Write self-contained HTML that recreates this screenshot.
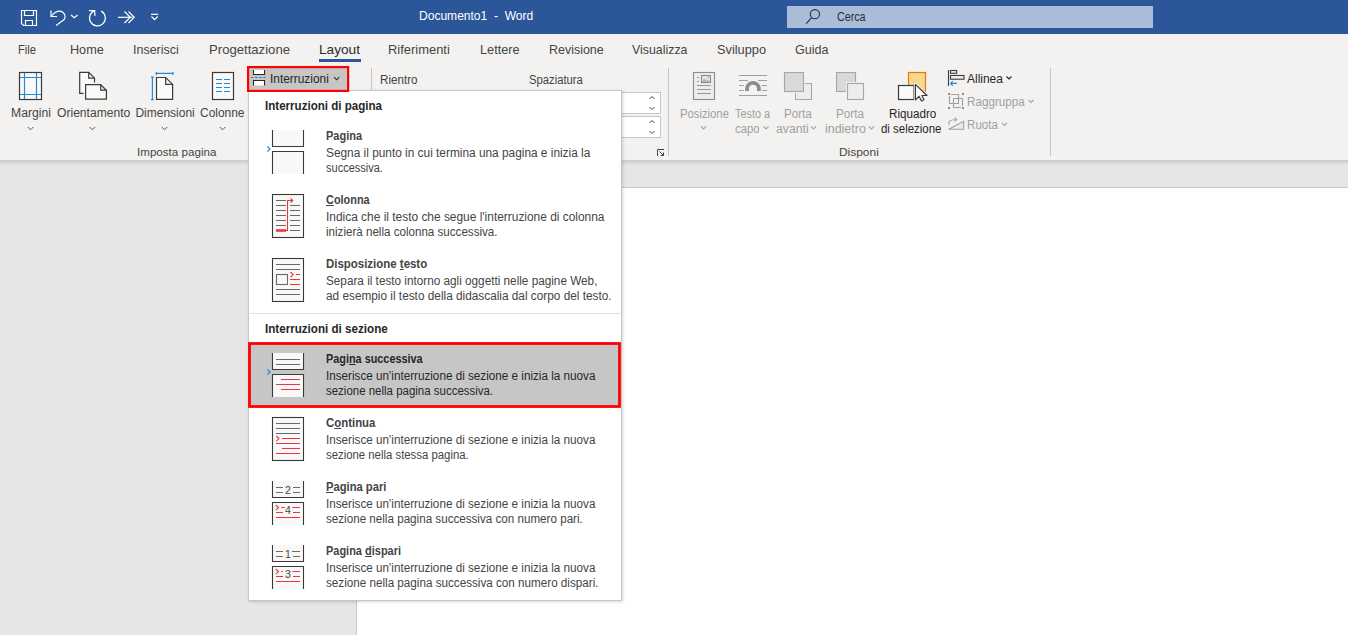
<!DOCTYPE html>
<html><head><meta charset="utf-8">
<style>
*{margin:0;padding:0;box-sizing:border-box}
html,body{width:1348px;height:635px;overflow:hidden;background:#e6e6e6;font-family:"Liberation Sans", sans-serif}
.a{position:absolute}
.t{position:absolute;white-space:pre;line-height:1;transform-origin:0 0}
u{text-decoration:underline;text-decoration-thickness:1px;text-underline-offset:1px}
</style></head><body>
<div class="a" style="left:0;top:0;width:1348px;height:34px;background:#2b579a"></div>
<div class="a" style="left:787px;top:6px;width:366px;height:22px;background:#aabcd7"></div>
<div class="a" style="left:0;top:34px;width:1348px;height:126px;background:#f3f2f1"></div>
<div class="a" style="left:319px;top:59px;width:42px;height:3px;background:#2b579a"></div>
<div class="a" style="left:0;top:160px;width:1348px;height:5px;background:linear-gradient(#cbcbcb,#e4e4e4)"></div>
<div class="a" style="left:357px;top:187px;width:991px;height:448px;background:#fff;border-top:1px solid #c6c6c6"></div>
<div class="a" style="left:356px;top:187px;width:1px;height:448px;background:#c6c6c6"></div>
<svg class="a" style="left:0;top:0" width="1348" height="635" viewBox="0 0 1348 635">
<g fill="none" stroke="#fff" stroke-width="1.2">
 <!-- save -->
 <path d="M21.5,10.5 H36.5 V25.5 H23.5 L21.5,23.5 Z"/>
 <path d="M24.5,10.5 V15.5 H33.5 V10.5"/>
 <path d="M25.5,25.5 V20.5 H32.5 V25.5"/>
 <!-- undo -->
 <path d="M51,10.5 V16.5 H57"/>
 <path d="M51.5,16 C55,11 60,10 63,12.5 C66,15 65.5,18 63.5,20 L56,25.5"/>
 <path d="M71,15 L74.3,17.8 L77.6,15"/>
 <!-- redo -->
 <path d="M94.8,10.6 A7.9,7.9 0 1 0 101.2,11.1"/>
 <path d="M88.9,10.6 H94.8 V15.9"/>
 <!-- >> -->
 <path d="M118,17.3 H132.5"/>
 <path d="M124.5,11.5 L130.2,17.3 L124.5,23"/>
 <path d="M128.5,11.5 L134.2,17.3 L128.5,23"/>
 <!-- customize -->
 <path d="M151,14.3 H158.2"/>
 <path d="M151.5,16.5 L154.6,19.6 L157.7,16.5"/>
 <!-- search -->
</g>
<g fill="none" stroke="#1f2d45" stroke-width="1.1">
 <circle cx="814.9" cy="14.2" r="4.6"/>
 <path d="M811.6,17.6 L806.2,23.6"/>
</g>
<!-- ribbon separators -->
<g stroke="#c8c6c4" stroke-width="1">
 <path d="M371.5,68 V90"/>
 <path d="M668.5,68 V156"/>
 <path d="M1050.5,68 V156"/>
</g>
<!-- Margini -->
<rect x="19.5" y="72.5" width="22" height="27" fill="#fafafa" stroke="#3b3a39" stroke-width="1.2"/>
<g stroke="#1e8bd6" stroke-width="1.2">
 <path d="M24.5,73 V99 M36.5,73 V99 M20,77.5 H41 M20,94.5 H41"/>
</g>
<!-- Orientamento -->
<g fill="#fafafa" stroke="#3b3a39" stroke-width="1.2" stroke-linejoin="miter">
 <path d="M83.6,93.4 H79.7 V72.4 H88.7 L94.5,78.2 V82.5"/>
 <path d="M88.7,72.4 V78.2 H94.5" fill="none"/>
 <path d="M85.6,84.7 H100.7 L106.4,90.2 V99.2 H85.6 Z"/>
 <path d="M100.7,84.7 V90.2 H106.4" fill="none"/>
</g>
<!-- Dimensioni -->
<g stroke="#1e8bd6" stroke-width="1.2" fill="none">
 <path d="M156.3,73.4 H173 M156.3,72 V75 M173,72 V75"/>
 <path d="M152.4,77.2 V99.7 M151,77.2 H153.8 M151,99.7 H153.8"/>
</g>
<path d="M156.5,77.5 H165.7 L172.6,84.4 V99.4 H156.5 Z" fill="#fafafa" stroke="#3b3a39" stroke-width="1.2"/>
<path d="M165.7,77.5 V84.4 H172.6" fill="none" stroke="#3b3a39" stroke-width="1.2"/>
<!-- Colonne -->
<rect x="212.5" y="72.5" width="21" height="27" fill="#fafafa" stroke="#3b3a39" stroke-width="1.2"/>
<g stroke="#1e8bd6" stroke-width="1.2">
 <path d="M216,79.5 H222 M224,79.5 H230 M216,83.5 H222 M224,83.5 H230 M216,87.5 H222 M224,87.5 H230 M216,91.5 H222 M224,91.5 H230"/>
</g>
<!-- chevrons under big buttons -->
<g fill="none" stroke="#555" stroke-width="1">
 <path d="M27.8,127 L30.6,129.8 L33.4,127"/>
 <path d="M89.6,127 L92.4,129.8 L95.2,127"/>
 <path d="M161.7,127 L164.5,129.8 L167.3,127"/>
 <path d="M219.8,127 L222.6,129.8 L225.4,127"/>
</g>
<!-- spinner boxes (partially hidden) -->
<rect x="560.5" y="92.5" width="100" height="21" fill="#fff" stroke="#c8c6c4"/>
<rect x="560.5" y="116.5" width="100" height="21" fill="#fff" stroke="#c8c6c4"/>
<g fill="none" stroke="#444" stroke-width="1">
 <path d="M649.5,99 L652,96.5 L654.5,99 M649.5,107 L652,109.5 L654.5,107"/>
 <path d="M649.5,123 L652,120.5 L654.5,123 M649.5,131 L652,133.5 L654.5,131"/>
 <path d="M657.5,156 V149.5 H664 M659.5,151.5 L663.5,155.5 M660.5,155.5 H663.5 V152.5"/>
</g>
<!-- Posizione -->
<g stroke="#8c8c8c" stroke-width="1.1" fill="none">
 <rect x="693.5" y="72.5" width="21" height="27" fill="#ededed"/>
 <rect x="701.5" y="75.5" width="9" height="7" fill="#e4e4e4"/>
</g>
<path d="M702,82 L704,78.3 L706.2,81 L707.6,79.6 L710,82 Z" fill="#b0b0b0"/>
<circle cx="708.4" cy="77.4" r="0.8" fill="#a0a0a0"/>
<g stroke="#969696" stroke-width="1.1" fill="none">
 <path d="M697,77.5 H699 M697,81.5 H699 M697,85.5 H711 M697,89.5 H711 M697,93.5 H711"/>
</g>
<!-- Testo a capo -->
<g stroke="#a0a0a0" stroke-width="1.1" fill="none">
 <path d="M739,75.5 H767 M739,80.5 H748 M758,80.5 H767 M739,85.5 H744 M762,85.5 H767 M739,90.5 H744 M762,90.5 H767 M739,95.5 H767"/>
</g>
<path d="M745.2,91 V88.8 A7.8,7.8 0 0 1 760.8,88.8 V91 H757 V88.8 A4,4 0 0 0 749,88.8 V91 Z" fill="#8c8c8c"/>
<!-- Porta avanti -->
<path d="M795.5,83.5 H811.5 V99.5 H795.5 Z" fill="#ededed"/>
<path d="M795.5,93 V99.5 H811.5 V83.5 H805" fill="none" stroke="#a6a6a6" stroke-width="1.1"/>
<rect x="784.5" y="72.5" width="19" height="19" fill="#d9d9d9" stroke="#a6a6a6" stroke-width="1.1"/>
<!-- Porta indietro -->
<rect x="836.5" y="72.5" width="19" height="19" fill="#d9d9d9" stroke="#a6a6a6" stroke-width="1.1"/>
<rect x="847.5" y="83.5" width="16" height="16" fill="#ededed" stroke="#f3f2f1" stroke-width="3"/>
<rect x="847.5" y="83.5" width="16" height="16" fill="#ededed" stroke="#a6a6a6" stroke-width="1.1"/>
<!-- chevrons disabled -->
<g fill="none" stroke="#a6a6a6" stroke-width="1.1">
 <path d="M701,126.5 L703.5,129 L706,126.5"/>
 <path d="M763.5,126.5 L766,129 L768.5,126.5"/>
 <path d="M811,126.5 L813.5,129 L816,126.5"/>
 <path d="M869,126.5 L871.5,129 L874,126.5"/>
 <path d="M1028.5,100 L1031,102.5 L1033.5,100"/>
 <path d="M1002,123 L1004.5,125.5 L1007,123"/>
</g>
<path d="M1006.5,76.5 L1009,79 L1011.5,76.5" fill="none" stroke="#262626" stroke-width="1.1"/>
<!-- Riquadro -->
<rect x="908.5" y="72.5" width="17" height="18.7" fill="#f8d98b" stroke="#e07a10" stroke-width="1.2"/>
<rect x="898.5" y="85.5" width="15.5" height="14" fill="#fafafa" stroke="#3b3a39" stroke-width="1.2"/>
<path d="M915.4,84.4 V100 L919,96.3 L921.5,101 L924,99.8 L921.8,95.5 L927,95.5 Z" fill="#fafafa" stroke="#f3f2f1" stroke-width="3" stroke-linejoin="round"/>
<path d="M915.4,84.4 V100 L919,96.3 L921.5,101 L924,99.8 L921.8,95.5 L927,95.5 Z" fill="#fafafa" stroke="#3b3a39" stroke-width="1.2" stroke-linejoin="round"/>
<!-- Allinea -->
<g fill="none" stroke="#3b3a39" stroke-width="1.1">
 <path d="M948.5,70 V86"/>
 <rect x="950.5" y="70.5" width="6.2" height="2.8"/>
 <rect x="950.5" y="75.5" width="13.5" height="3.7"/>
</g>
<g fill="none" stroke="#1e8bd6" stroke-width="1.2">
 <path d="M950.5,83.4 H957 M952.8,81.2 L950.6,83.4 L952.8,85.6"/>
</g>
<!-- Raggruppa -->
<g fill="#8a8a8a">
 <rect x="948" y="93" width="2" height="2"/><rect x="962" y="93" width="2" height="2"/>
 <rect x="948" y="107" width="2" height="2"/><rect x="962" y="107" width="2" height="2"/>
</g>
<g fill="none" stroke="#a0a0a0" stroke-width="1.1">
 <path d="M951,94.5 H958.5 V103.5 H949.5 V96"/>
 <path d="M953.5,98.5 H962.5 V106 M961,107.5 H953.5 V98.5"/>
</g>
<!-- Ruota -->
<path d="M948.7,129.3 L963.6,121.3 V129.3 Z" fill="#ececec" stroke="#a0a0a0" stroke-width="1.1"/>
<path d="M949.5,125 C947.5,122 950,119.5 956.5,119.5 M954.5,117.3 L956.8,119.5 L954.5,121.7" fill="none" stroke="#a8a8a8" stroke-width="1.1"/>
</svg>
<!-- dropdown -->
<div class="a" style="left:248px;top:90px;width:374px;height:511px;background:#fff;border:1px solid #c6c6c6;box-shadow:1px 1px 3px rgba(0,0,0,0.16)"></div>
<svg class="a" style="left:0;top:0" width="1348" height="635" viewBox="0 0 1348 635">
<!-- Interruzioni highlighted button -->
<rect x="248.1" y="67.1" width="100" height="23.8" fill="#c8c6c4" stroke="#f00" stroke-width="2.2"/>
<g fill="#fff" stroke="#262626" stroke-width="1.1">
 <path d="M253.5,70 V74.5 H264.5 V70"/>
 <path d="M253.5,85.5 V80.5 H264.5 V85.5"/>
</g>
<path d="M334,77.2 L336.6,79.8 L339.2,77.2" fill="none" stroke="#262626" stroke-width="1.1"/>
<path d="M251,77.5 H266.5" stroke="#1e8bd6" stroke-width="1" stroke-dasharray="2.6 1.5"/>
<path d="M250,313.5 H620" stroke="#e1dfdd" stroke-width="1"/>
<rect x="249.5" y="343.5" width="370" height="63" fill="#c6c6c6" stroke="#f00" stroke-width="2.8"/>
<!-- Pagina icon -->
<g fill="#f8f8f8" stroke="#3b3a39" stroke-width="1.1">
 <path d="M272.5,130 V146.5 H303.5 V130"/>
 <path d="M272.5,174 V151.5 H303.5 V174"/>
</g>
<path d="M267.3,146.3 L270,149 L267.3,151.7" fill="none" stroke="#1e8bd6" stroke-width="1.2"/>
<!-- Colonna icon -->
<rect x="272.5" y="194.5" width="31" height="43" fill="#f8f8f8" stroke="#3b3a39" stroke-width="1.1"/>
<g stroke="#6e6964" stroke-width="1.1">
 <path d="M276,200.5 H286 M276,205.5 H286 M276,210.5 H286 M276,215.5 H286 M276,220.5 H286 M276,225.5 H286"/>
 <path d="M290,205.5 H300 M290,210.5 H300 M290,215.5 H300 M290,220.5 H300 M290,225.5 H300 M290,230.5 H300"/>
</g>
<g stroke="#e8383d" fill="none">
 <path d="M276,230.5 H286" stroke-width="2.6"/>
 <path d="M286,230.5 H287.5 V200.5 H292.5" stroke-width="1.1"/>
 <path d="M290.5,198.3 L292.8,200.5 L290.5,202.7" stroke-width="1.1"/>
</g>
<!-- Disposizione testo icon -->
<rect x="272.5" y="258.5" width="31" height="43" fill="#f8f8f8" stroke="#3b3a39" stroke-width="1.1"/>
<g stroke="#6e6964" stroke-width="1.1" fill="none">
 <path d="M276,264.5 H300 M276,269.5 H300 M276,289.5 H300 M276,294.5 H300"/>
 <rect x="276.5" y="274.5" width="11" height="10"/>
</g>
<g stroke="#e8383d" stroke-width="1.1" fill="none">
 <path d="M290.5,272 L293.2,274.6 L290.5,277.2"/>
 <path d="M296,274.5 H300 M290,279.5 H300 M290,284.5 H300"/>
</g>
<!-- Pagina successiva icon -->
<g fill="#f8f8f8" stroke="#3b3a39" stroke-width="1.1">
 <path d="M272.5,353 V369.5 H303.5 V353"/>
 <path d="M272.5,397 V374.5 H303.5 V397"/>
</g>
<g stroke="#6e6964" stroke-width="1.1"><path d="M276,359.5 H300 M276,364.5 H300"/></g>
<g stroke="#e8383d" stroke-width="1.1"><path d="M281,379.5 H300 M276,384.5 H300 M281,389.5 H300"/></g>
<path d="M267.3,369.3 L270,372 L267.3,374.7" fill="none" stroke="#1e8bd6" stroke-width="1.2"/>
<!-- Continua icon -->
<rect x="272.5" y="417.5" width="31" height="43" fill="#f8f8f8" stroke="#3b3a39" stroke-width="1.1"/>
<g stroke="#6e6964" stroke-width="1.1"><path d="M276,423.5 H300 M276,428.5 H300 M276,433.5 H300"/></g>
<g stroke="#e8383d" stroke-width="1.1" fill="none">
 <path d="M276.3,436 L279,438.6 L276.3,441.2"/>
 <path d="M282,438.5 H300 M276,443.5 H300 M282,448.5 H300 M276,453.5 H300"/>
</g>
<!-- Pagina pari icon -->
<g fill="#f8f8f8" stroke="#3b3a39" stroke-width="1.1">
 <path d="M272.5,481 V497.5 H303.5 V481"/>
 <path d="M272.5,525 V502.5 H303.5 V525"/>
</g>
<g stroke="#6e6964" stroke-width="1.1"><path d="M276,487.5 H283 M293,487.5 H300 M276,492.5 H283 M293,492.5 H300"/></g>
<g stroke="#e8383d" stroke-width="1.1" fill="none">
 <path d="M275.8,505 L278.5,507.6 L275.8,510.2"/>
 <path d="M281.3,507.5 H284.8 M292.3,507.5 H300 M276,512.5 H283 M293,512.5 H300 M276,517.5 H300"/>
</g>
<!-- Pagina dispari icon -->
<g fill="#f8f8f8" stroke="#3b3a39" stroke-width="1.1">
 <path d="M272.5,545 V561.5 H303.5 V545"/>
 <path d="M272.5,589 V566.5 H303.5 V589"/>
</g>
<g stroke="#6e6964" stroke-width="1.1"><path d="M276,551.5 H283 M292,551.5 H300 M276,556.5 H283 M293,556.5 H300"/></g>
<g stroke="#e8383d" stroke-width="1.1" fill="none">
 <path d="M275.8,569 L278.5,571.6 L275.8,574.2"/>
 <path d="M281.3,571.5 H283 M292.3,571.5 H300 M276,576.5 H283 M293,576.5 H300 M276,581.5 H300"/>
</g>
<g font-family="Liberation Sans, sans-serif" font-size="10.5" fill="#444" text-anchor="middle">
 <text x="287.9" y="493.8">2</text>
 <text x="287.9" y="513.8">4</text>
 <text x="287.9" y="557.8">1</text>
 <text x="287.9" y="577.8">3</text>
</g>
</svg>

<div class="t" id="t0" style="left:419.4px;top:10.32px;font-size:12.5px;font-weight:400;color:#ffffff;transform:scaleX(0.9631);">Documento1  -  Word</div>
<div class="t" id="t1" style="left:836.8px;top:10.74px;font-size:12px;font-weight:400;color:#1f2d45;transform:scaleX(0.8902);">Cerca</div>
<div class="t" id="t2" style="left:17.5px;top:44.23px;font-size:12.6px;font-weight:400;color:#444;transform:scaleX(0.8918);">File</div>
<div class="t" id="t3" style="left:69.7px;top:44.23px;font-size:12.6px;font-weight:400;color:#444;transform:scaleX(1.0032);">Home</div>
<div class="t" id="t4" style="left:133.0px;top:44.23px;font-size:12.6px;font-weight:400;color:#444;transform:scaleX(0.9916);">Inserisci</div>
<div class="t" id="t5" style="left:209.0px;top:44.23px;font-size:12.6px;font-weight:400;color:#444;transform:scaleX(1.0422);">Progettazione</div>
<div class="t" id="t6" style="left:319.0px;top:44.23px;font-size:12.6px;font-weight:400;color:#2b2b2b;transform:scaleX(1.0843);">Layout</div>
<div class="t" id="t7" style="left:388.2px;top:44.23px;font-size:12.6px;font-weight:400;color:#444;transform:scaleX(1.0268);">Riferimenti</div>
<div class="t" id="t8" style="left:479.8px;top:44.23px;font-size:12.6px;font-weight:400;color:#444;transform:scaleX(1.0123);">Lettere</div>
<div class="t" id="t9" style="left:549.0px;top:44.23px;font-size:12.6px;font-weight:400;color:#444;transform:scaleX(0.9889);">Revisione</div>
<div class="t" id="t10" style="left:632.0px;top:44.23px;font-size:12.6px;font-weight:400;color:#444;transform:scaleX(0.9826);">Visualizza</div>
<div class="t" id="t11" style="left:717.0px;top:44.23px;font-size:12.6px;font-weight:400;color:#444;transform:scaleX(1.0142);">Sviluppo</div>
<div class="t" id="t12" style="left:795.0px;top:44.23px;font-size:12.6px;font-weight:400;color:#444;transform:scaleX(0.9967);">Guida</div>
<div class="t" id="t13" style="left:10.6px;top:106.64px;font-size:12px;font-weight:400;color:#444;transform:scaleX(1.0137);">Margini</div>
<div class="t" id="t14" style="left:56.7px;top:106.64px;font-size:12px;font-weight:400;color:#444;transform:scaleX(1.0082);">Orientamento</div>
<div class="t" id="t15" style="left:135.4px;top:106.64px;font-size:12px;font-weight:400;color:#444;">Dimensioni</div>
<div class="t" id="t16" style="left:200.3px;top:106.64px;font-size:12px;font-weight:400;color:#444;transform:scaleX(0.9955);">Colonne</div>
<div class="t" id="t17" style="left:137.2px;top:147.17px;font-size:11.5px;font-weight:400;color:#444;transform:scaleX(1.0097);">Imposta pagina</div>
<div class="t" id="t18" style="left:270.0px;top:73.34px;font-size:12px;font-weight:400;color:#262626;transform:scaleX(0.9903);">Interruzioni</div>
<div class="t" id="t19" style="left:380.3px;top:74.34px;font-size:12px;font-weight:400;color:#444;transform:scaleX(0.9719);">Rientro</div>
<div class="t" id="t20" style="left:528.8px;top:74.34px;font-size:12px;font-weight:400;color:#444;transform:scaleX(0.9394);">Spaziatura</div>
<div class="t" id="t21" style="left:679.6px;top:107.54px;font-size:12px;font-weight:400;color:#a19f9d;transform:scaleX(0.9398);">Posizione</div>
<div class="t" id="t22" style="left:735.0px;top:107.54px;font-size:12px;font-weight:400;color:#a19f9d;transform:scaleX(0.9043);">Testo a</div>
<div class="t" id="t23" style="left:735.0px;top:123.04px;font-size:12px;font-weight:400;color:#a19f9d;transform:scaleX(0.9412);">capo</div>
<div class="t" id="t24" style="left:784.0px;top:107.54px;font-size:12px;font-weight:400;color:#a19f9d;transform:scaleX(0.9691);">Porta</div>
<div class="t" id="t25" style="left:775.9px;top:123.04px;font-size:12px;font-weight:400;color:#a19f9d;transform:scaleX(1.0178);">avanti</div>
<div class="t" id="t26" style="left:836.0px;top:107.54px;font-size:12px;font-weight:400;color:#a19f9d;transform:scaleX(0.9760);">Porta</div>
<div class="t" id="t27" style="left:824.8px;top:123.04px;font-size:12px;font-weight:400;color:#a19f9d;transform:scaleX(1.0366);">indietro</div>
<div class="t" id="t28" style="left:888.5px;top:107.54px;font-size:12px;font-weight:400;color:#262626;transform:scaleX(0.9712);">Riquadro</div>
<div class="t" id="t29" style="left:881.3px;top:123.04px;font-size:12px;font-weight:400;color:#262626;transform:scaleX(0.9531);">di selezione</div>
<div class="t" id="t30" style="left:966.8px;top:73.34px;font-size:12px;font-weight:400;color:#262626;transform:scaleX(0.9964);">Allinea</div>
<div class="t" id="t31" style="left:966.8px;top:95.64px;font-size:12px;font-weight:400;color:#a19f9d;transform:scaleX(0.9732);">Raggruppa</div>
<div class="t" id="t32" style="left:966.8px;top:119.34px;font-size:12px;font-weight:400;color:#a19f9d;transform:scaleX(0.9678);">Ruota</div>
<div class="t" id="t33" style="left:838.9px;top:147.17px;font-size:11.5px;font-weight:400;color:#444;transform:scaleX(1.0376);">Disponi</div>
<div class="t" id="t34" style="left:264.7px;top:100.24px;font-size:12px;font-weight:700;color:#262626;transform:scaleX(0.9642);">Interruzioni di pagina</div>
<div class="t" id="t35" style="left:326.0px;top:129.84px;font-size:12px;font-weight:700;color:#444;transform:scaleX(0.9143);">Pa<u>g</u>ina</div>
<div class="t" id="t36" style="left:326.1px;top:146.64px;font-size:12px;font-weight:400;color:#444;transform:scaleX(0.9880);">Segna il punto in cui termina una pagina e inizia la</div>
<div class="t" id="t37" style="left:326.1px;top:161.64px;font-size:12px;font-weight:400;color:#444;transform:scaleX(0.9173);">successiva.</div>
<div class="t" id="t38" style="left:326.0px;top:194.14px;font-size:12px;font-weight:700;color:#444;transform:scaleX(0.9083);"><u>C</u>olonna</div>
<div class="t" id="t39" style="left:326.1px;top:210.94px;font-size:12px;font-weight:400;color:#444;transform:scaleX(0.9930);">Indica che il testo che segue l'interruzione di colonna</div>
<div class="t" id="t40" style="left:326.1px;top:225.94px;font-size:12px;font-weight:400;color:#444;transform:scaleX(0.9665);">inizierà nella colonna successiva.</div>
<div class="t" id="t41" style="left:326.0px;top:257.94px;font-size:12px;font-weight:700;color:#444;transform:scaleX(0.9544);">Disposizione <u>t</u>esto</div>
<div class="t" id="t42" style="left:326.1px;top:274.74px;font-size:12px;font-weight:400;color:#444;transform:scaleX(0.9787);">Separa il testo intorno agli oggetti nelle pagine Web,</div>
<div class="t" id="t43" style="left:326.1px;top:289.74px;font-size:12px;font-weight:400;color:#444;transform:scaleX(0.9842);">ad esempio il testo della didascalia dal corpo del testo.</div>
<div class="t" id="t44" style="left:264.7px;top:322.84px;font-size:12px;font-weight:700;color:#262626;transform:scaleX(0.9685);">Interruzioni di sezione</div>
<div class="t" id="t45" style="left:325.7px;top:352.64px;font-size:12px;font-weight:700;color:#262626;transform:scaleX(0.9049);">Pagi<u>n</u>a successiva</div>
<div class="t" id="t46" style="left:326.1px;top:370.44px;font-size:12px;font-weight:400;color:#262626;transform:scaleX(0.9745);">Inserisce un'interruzione di sezione e inizia la nuova</div>
<div class="t" id="t47" style="left:326.1px;top:385.44px;font-size:12px;font-weight:400;color:#262626;transform:scaleX(0.9561);">sezione nella pagina successiva.</div>
<div class="t" id="t48" style="left:325.7px;top:416.84px;font-size:12px;font-weight:700;color:#444;transform:scaleX(0.9497);">C<u>o</u>ntinua</div>
<div class="t" id="t49" style="left:326.1px;top:433.64px;font-size:12px;font-weight:400;color:#444;transform:scaleX(0.9745);">Inserisce un'interruzione di sezione e inizia la nuova</div>
<div class="t" id="t50" style="left:326.1px;top:448.64px;font-size:12px;font-weight:400;color:#444;transform:scaleX(0.9464);">sezione nella stessa pagina.</div>
<div class="t" id="t51" style="left:325.7px;top:480.84px;font-size:12px;font-weight:700;color:#444;transform:scaleX(0.9335);"><u>P</u>agina pari</div>
<div class="t" id="t52" style="left:326.1px;top:497.64px;font-size:12px;font-weight:400;color:#444;transform:scaleX(0.9745);">Inserisce un'interruzione di sezione e inizia la nuova</div>
<div class="t" id="t53" style="left:326.1px;top:512.64px;font-size:12px;font-weight:400;color:#444;transform:scaleX(0.9697);">sezione nella pagina successiva con numero pari.</div>
<div class="t" id="t54" style="left:325.7px;top:545.14px;font-size:12px;font-weight:700;color:#444;transform:scaleX(0.9141);">Pagina <u>d</u>ispari</div>
<div class="t" id="t55" style="left:326.1px;top:561.94px;font-size:12px;font-weight:400;color:#444;transform:scaleX(0.9745);">Inserisce un'interruzione di sezione e inizia la nuova</div>
<div class="t" id="t56" style="left:326.1px;top:576.94px;font-size:12px;font-weight:400;color:#444;transform:scaleX(0.9726);">sezione nella pagina successiva con numero dispari.</div>
</body></html>
